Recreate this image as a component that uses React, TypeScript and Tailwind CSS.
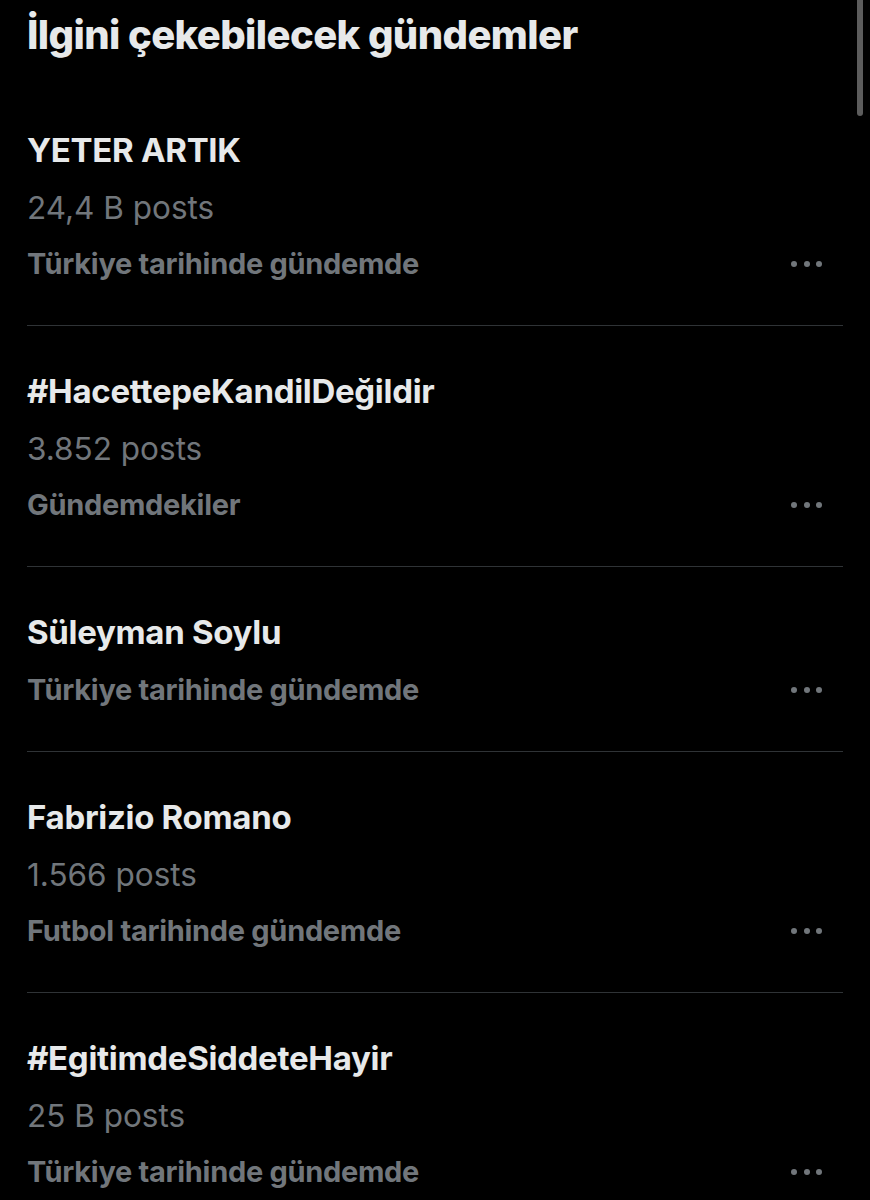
const trends = [
  { title: "YETER ARTIK", posts: "24,4 B posts", context: "Türkiye tarihinde gündemde" },
  { title: "#HacettepeKandilDeğildir", posts: "3.852 posts", context: "Gündemdekiler" },
  { title: "Süleyman Soylu", posts: null, context: "Türkiye tarihinde gündemde" },
  { title: "Fabrizio Romano", posts: "1.566 posts", context: "Futbol tarihinde gündemde" },
  { title: "#EgitimdeSiddeteHayir", posts: "25 B posts", context: "Türkiye tarihinde gündemde" },
];

function MoreDots() {
  return (
    <button className="flex items-center gap-[6.5px] pr-[21px]" aria-label="Daha fazla">
      <span className="block w-[6px] h-[6px] rounded-full bg-[#71767b]" />
      <span className="block w-[6px] h-[6px] rounded-full bg-[#71767b]" />
      <span className="block w-[6px] h-[6px] rounded-full bg-[#71767b]" />
    </button>
  );
}

export default function App() {
  return (
    <div className="relative w-[870px] h-[1200px] overflow-hidden bg-black px-[27px] font-['Inter','Liberation_Sans',sans-serif]">
      <div className="h-[85px]">
        <h2 className="text-[40px] leading-[70px] font-extrabold text-[#e7e9ea] tracking-[-0.6px] whitespace-nowrap">
          İlgini çekebilecek gündemler
        </h2>
      </div>

      {trends.map((t, i) => (
        <div key={i} className={i < trends.length - 1 ? "border-b border-[#2f3336]" : ""}>
          <div className="pt-[37px] pb-[33px]">
            <div className="h-[58px] flex items-center text-[33px] font-bold text-[#e7e9ea] tracking-[-0.3px]">
              {t.title}
            </div>
            {t.posts && (
              <div className="h-[56px] flex items-center text-[31.5px] text-[#71767b]">
                {t.posts}
              </div>
            )}
            <div className="h-[56px] flex items-center justify-between">
              <span className="text-[29px] font-bold text-[#71767b] tracking-[-0.3px]">{t.context}</span>
              <MoreDots />
            </div>
          </div>
        </div>
      ))}

      <div className="absolute right-[7px] top-0 w-[6px] h-[116px] rounded-b-full bg-[#5c5c5c]" />
    </div>
  );
}
